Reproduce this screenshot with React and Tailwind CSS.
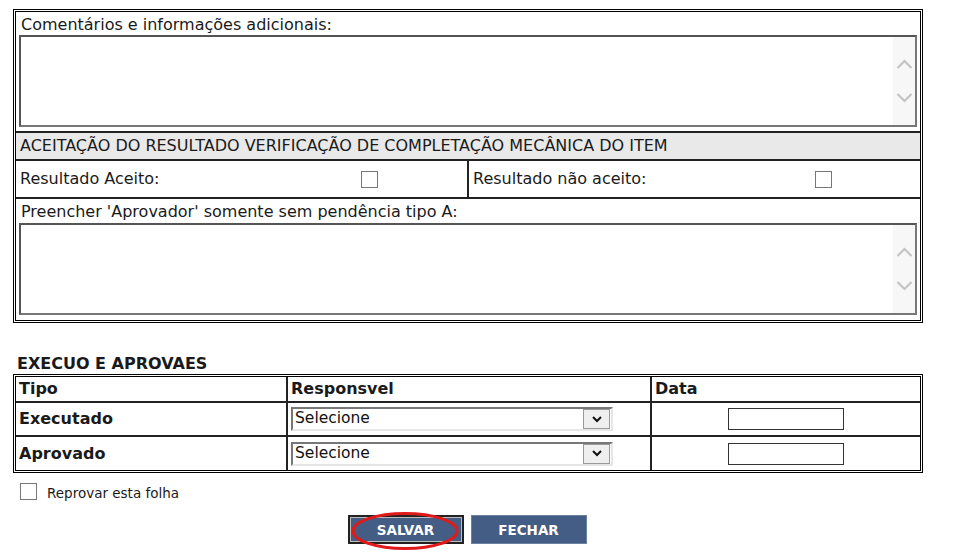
import React from 'react'

const font = { fontFamily: '"DejaVu Sans", Verdana, sans-serif' }

function FakeTextarea({ height }) {
  return (
    <div className={`flex border-2 border-[#555] border-r-[#777] border-b-[#777] bg-white ${height}`}>
      <div className="flex-1" />
      <div className="w-[22px] bg-[#f7f7f7] flex flex-col items-center justify-center gap-[24px]">
        <svg width="17" height="10" viewBox="0 0 17 10">
          <path d="M1.5 9 L8.5 2 L15.5 9" fill="none" stroke="#c4c4c4" strokeWidth="2.2" />
        </svg>
        <svg width="17" height="10" viewBox="0 0 17 10">
          <path d="M1.5 1 L8.5 8 L15.5 1" fill="none" stroke="#c4c4c4" strokeWidth="2.2" />
        </svg>
      </div>
    </div>
  )
}

function Checkbox({ className = '' }) {
  return <div className={`w-[17px] h-[17px] border border-[#777] bg-white ${className}`} />
}

function FakeSelect() {
  return (
    <div className="flex items-center w-[322px] h-[24px] border-2 border-t-[#777] border-l-[#777] border-r-[#e6e6e6] border-b-[#e6e6e6] bg-white">
      <span className="flex-1 pl-[2px] text-[15.5px] text-[#111] leading-none">Selecione</span>
      <div className="w-[27px] h-[20px] border border-[#999] bg-[#efefef] flex items-center justify-center mr-[1px]">
        <svg width="10" height="7" viewBox="0 0 10 7">
          <path d="M1 1 L5 5 L9 1" fill="none" stroke="#111" strokeWidth="2" />
        </svg>
      </div>
    </div>
  )
}

export default function App() {
  return (
    <div className="w-[955px] h-[556px] bg-white text-[#1a1a1a] overflow-hidden" style={font}>
      <div className="pt-[9px] pl-[13px] w-[923px]">
        {/* top form */}
        <div className="border-[3px] border-black border-double">
          <div className="px-[3px] pt-[3px] pb-[4px] border-b-2 border-[#222]">
            <div className="text-[16px] leading-[19px] pl-[2px] mb-[1px]">Comentários e informações adicionais:</div>
            <FakeTextarea height="h-[92px]" />
          </div>
          <div className="bg-[#e9e9e9] h-[28px] flex items-center pl-[4px] text-[16px] border-b-2 border-[#222]">
            ACEITAÇÃO DO RESULTADO VERIFICAÇÃO DE COMPLETAÇÃO MECÂNICA DO ITEM
          </div>
          <div className="flex h-[38px] border-b-2 border-[#222]">
            <div className="w-[453px] flex items-center pl-[4px] text-[16px] border-r-2 border-[#222]">
              <span className="flex-1">Resultado Aceito:</span>
              <Checkbox className="mr-[89px]" />
            </div>
            <div className="flex-1 flex items-center pl-[4px] text-[16px]">
              <span className="flex-1">Resultado não aceito:</span>
              <Checkbox className="mr-[88px]" />
            </div>
          </div>
          <div className="px-[3px] pt-[3px] pb-[5px]">
            <div className="text-[16px] leading-[19px] pl-[2px] mb-[2px]">Preencher 'Aprovador' somente sem pendência tipo A:</div>
            <FakeTextarea height="h-[92px]" />
          </div>
        </div>

        {/* executions */}
        <div className="mt-[31px] pl-[4px] text-[16px] font-bold leading-[19px]">EXECUO E APROVAES</div>
        <div className="mt-[1px] border-[3px] border-black border-double text-[16px] font-bold">
          <div className="flex h-[26px] border-b-2 border-[#222]">
            <div className="w-[272px] pl-[3px] flex items-center border-r-2 border-[#222]">Tipo</div>
            <div className="w-[364px] pl-[3px] flex items-center border-r-2 border-[#222]">Responsvel</div>
            <div className="flex-1 pl-[3px] flex items-center">Data</div>
          </div>
          <div className="flex h-[34px] border-b-2 border-[#222]">
            <div className="w-[272px] pl-[3px] flex items-center border-r-2 border-[#222]">Executado</div>
            <div className="w-[364px] pl-[3px] flex items-center border-r-2 border-[#222] font-normal">
              <FakeSelect />
            </div>
            <div className="flex-1 flex items-center justify-center">
              <div className="w-[116px] h-[22px] border border-[#333] bg-white" />
            </div>
          </div>
          <div className="flex h-[33px]">
            <div className="w-[272px] pl-[3px] flex items-center border-r-2 border-[#222]">Aprovado</div>
            <div className="w-[364px] pl-[3px] flex items-center border-r-2 border-[#222] font-normal">
              <FakeSelect />
            </div>
            <div className="flex-1 flex items-center justify-center">
              <div className="w-[116px] h-[22px] border border-[#333] bg-white" />
            </div>
          </div>
        </div>

        {/* footer */}
        <div className="mt-[6px] pl-[7px] flex items-center gap-[10px]">
          <Checkbox />
          <span className="text-[13.5px] mt-[4px]">Reprovar esta folha</span>
        </div>
        <div className="mt-[12px] flex justify-center gap-[7px] pr-[2px]">
          <div className="relative">
            <button className="w-[116px] h-[29px] border-2 border-[#222] bg-[#435d84] text-white text-[13.5px] font-bold outline outline-1 outline-[#bbb] -outline-offset-[3px]">
              SALVAR
            </button>
            <svg className="absolute -left-[2px] -top-[6px]" width="120" height="48" viewBox="0 0 120 48">
              <ellipse cx="59" cy="22" rx="52" ry="17.5" fill="none" stroke="#e01a1a" strokeWidth="3" />
            </svg>
          </div>
          <button className="w-[116px] h-[29px] bg-[#435d84] text-white text-[13.5px] font-bold border border-[#6c80a0]">
            FECHAR
          </button>
        </div>
      </div>
    </div>
  )
}
